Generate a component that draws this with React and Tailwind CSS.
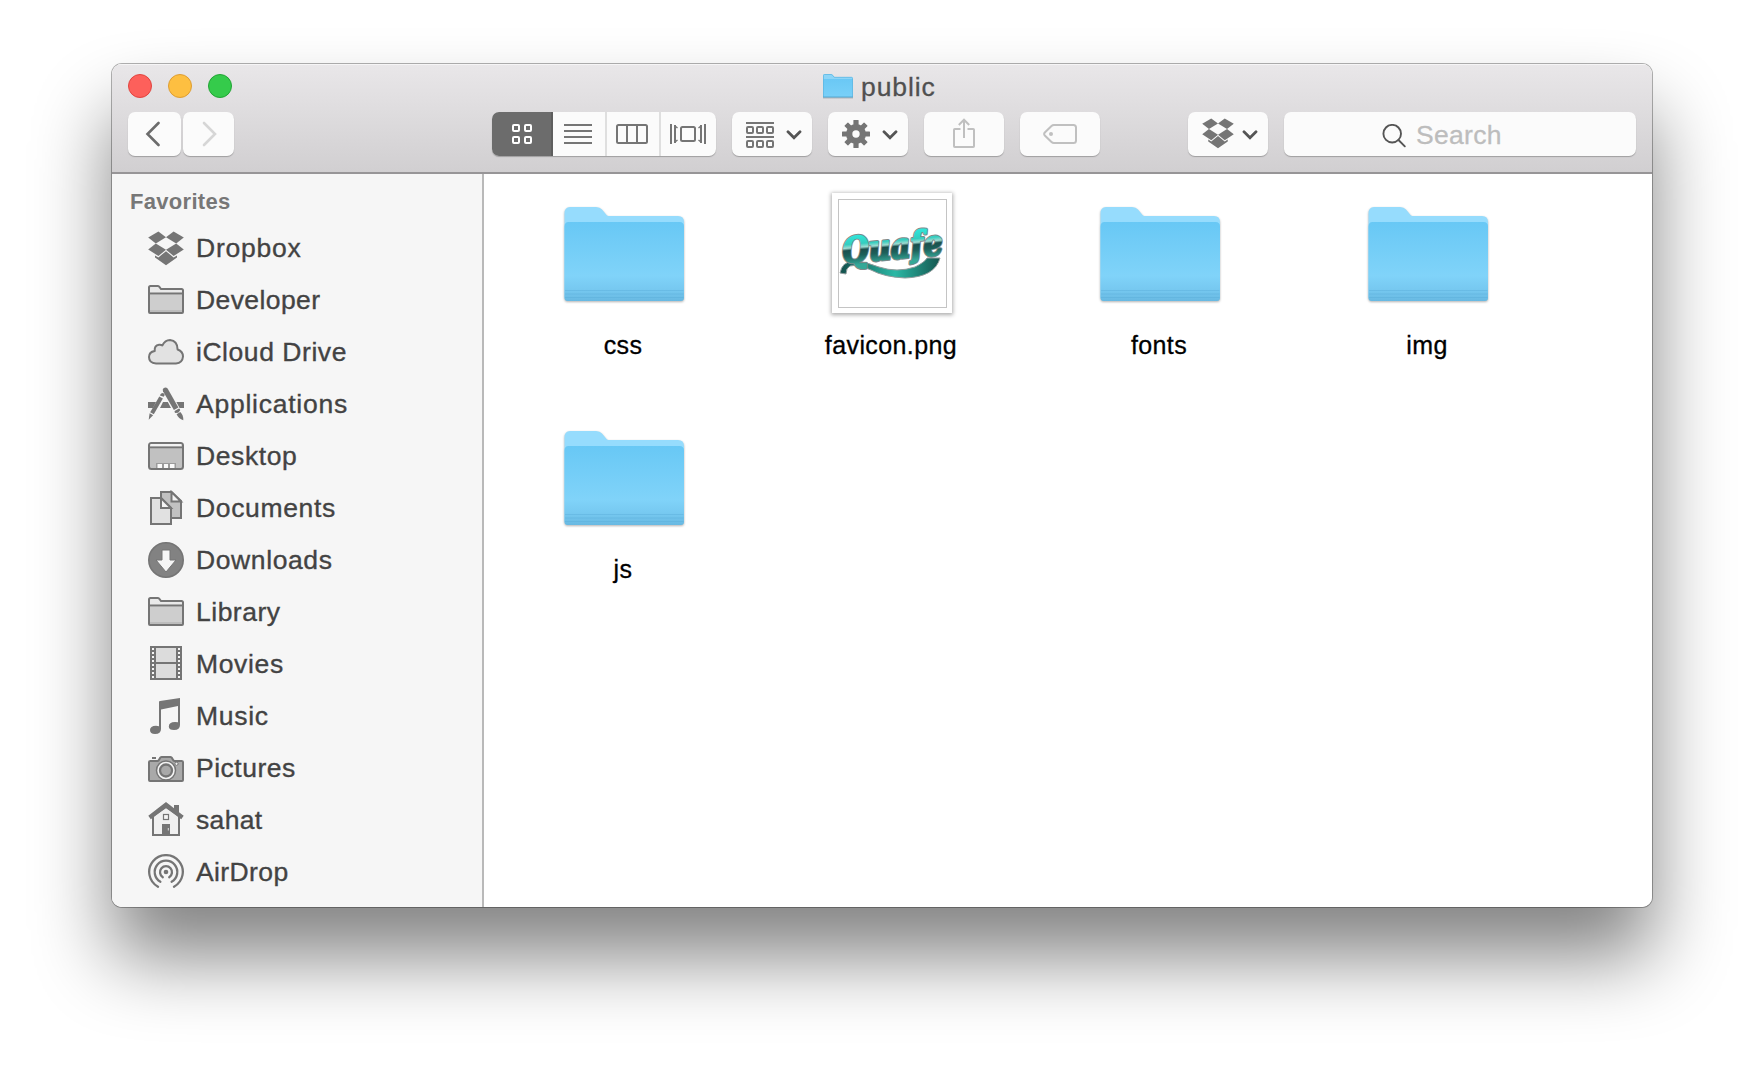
import React from "react";

const G = "#757575";

const Dropbox = ({ w = 36, h = 35, className = "" }) => (
  <svg width={w} height={h} viewBox="0 0 36 35" fill={G} className={className}>
    <path d="M10.4 0.5 18 6.2 7.8 12.4 0.2 6.4z" />
    <path d="M25.6 0.5 18 6.2 28.2 12.4 35.8 6.4z" />
    <path d="M7.8 12.4 0.2 18.4 10.4 25 18 18.8z" />
    <path d="M28.2 12.4 35.8 18.4 25.6 25 18 18.8z" />
    <path d="M18 20.2 10.4 26.4 7 24.4 7 26.6 18 34.2 29 26.6 29 24.4 25.6 26.4z" />
  </svg>
);

const FolderOutline = () => (
  <svg width="36" height="36" viewBox="0 0 36 36">
    <path d="M1 30V5.500Q1 4 2.500 4H9.600Q10.600 4 11.200 4.700L13 7H33.500Q35 7 35 8.500V30Q35 31 34 31H2Q1 31 1 30z" fill="#e9e9e9" stroke={G} strokeWidth="2" />
    <path d="M2 12.500H34V30H2z" fill="#cecece" />
    <path d="M2 28H34V30H2z" fill="#bcbcbc" />
    <path d="M1 11.500H35" stroke={G} strokeWidth="2" />
  </svg>
);

const Cloud = () => (
  <svg width="36" height="36" viewBox="0 0 36 36">
    <path d="M8 29.500Q1 29 1 23Q1 18 6.700 17Q6.200 11.500 11 10.800Q13 10.500 14.300 11.500Q17 6 22 6Q29.500 6.800 29.600 15.500Q35 17.500 35 22.500Q34.500 29 28 29.500z" fill="#e2e2e2" stroke={G} strokeWidth="2" strokeLinejoin="round" />
  </svg>
);

const Apps = () => (
  <svg width="36" height="36" viewBox="0 0 36 36" fill={G}>
    <path d="M0 16H8L5 22H0zM15 16H19.800L23 22H12zM28.400 16H36V22H31.600z" />
    <path d="M15.500 2.300Q17.800 .5 19.600 2.600L30.400 21.400 25.900 24 15 5.200Q14.300 3.500 15.500 2.300z" />
    <path d="M26.600 25 31 22.500Q32 22.600 32.200 24.200L30.200 26.800 27.400 27Q26.200 26.300 26.600 25z" />
    <path d="M28.600 28.200 32.300 26Q35.500 29 35.300 34.300 30.500 32.500 28.600 28.200z" />
    <path d="M12.200 8.800Q13.800 6 16.300 7.800L16.700 9 15.700 10.800 11.900 9.400z" />
    <path d="M11.300 10.500 14.900 12.500 5.800 28.200 2.200 26.200z" />
    <path d="M1.600 27.300 5.100 29.300 .7 33.800z" />
  </svg>
);

const Desktop = () => (
  <svg width="36" height="36" viewBox="0 0 36 36">
    <rect x="1" y="5" width="34" height="26" rx="2.500" fill="#c1c1c1" stroke={G} strokeWidth="2" />
    <path d="M2.500 6H33.500V8.500H2z" fill="#f2f2f2" />
    <path d="M1 9.300H35" stroke={G} strokeWidth="1.800" />
    <path d="M8 25H28V30H8z" fill="#9b9b9b" />
    <path d="M9.500 26H14V30H9.500zM16 26H20V30H16zM22 26H26.500V30H22z" fill="#fafafa" />
  </svg>
);

const Documents = () => (
  <svg width="36" height="36" viewBox="0 0 36 36" stroke={G} strokeWidth="2">
    <path d="M13 2H23.500L33 11V28H13z" fill="#c1c1c1" />
    <path d="M23.500 2V11.500H33z" fill="#f3f3f3" />
    <path d="M3 8H13L23 18V34H3z" fill="#e1e1e1" />
    <path d="M13 8V18H23z" fill="#f5f5f5" />
  </svg>
);

const Downloads = () => (
  <svg width="36" height="36" viewBox="0 0 36 36">
    <circle cx="18" cy="18" r="17.200" fill="#828282" stroke={G} strokeWidth="1.600" />
    <path d="M14 8H22V18H28L18 30 8 18H14z" fill="#f6f6f6" stroke={G} strokeWidth="1" />
  </svg>
);

const Movies = () => (
  <svg width="36" height="36" viewBox="0 0 36 36">
    <path d="M2 0H34V34H2z" fill={G} />
    <path d="M8 2H28V16H8zM8 18H28V32H8z" fill="#dcdcdc" />
    {[2, 6, 10, 14, 18, 22, 26, 30].map((y) => (
      <React.Fragment key={y}>
        <rect x="4" y={y} width="2" height="2" fill="#f5f5f5" />
        <rect x="30" y={y} width="2" height="2" fill="#f5f5f5" />
      </React.Fragment>
    ))}
  </svg>
);

const Music = () => (
  <svg width="36" height="36" viewBox="0 0 36 36" fill={G}>
    <path d="M11 4Q11 3.200 12 3L32 0V27Q32 32 26 32 20.800 32 20.800 28.500 20.800 24.200 27 24 29 24 30 24.300V8L13 11.500V31Q13 36 7 36 2 36 2 32 2 28 8 27.800 10 27.800 11 28.200z" />
  </svg>
);

const Pictures = () => (
  <svg width="36" height="36" viewBox="0 0 36 36">
    <path d="M4 7H8V9H4z" fill={G} />
    <path d="M2.500 11H9.500Q10.500 11 11.500 9L12 8Q12.500 7 13.500 7H22.500Q23.500 7 24 8L24.500 9Q25.500 11 26.500 11H33.500Q35 11 35 12V30Q35 31 34 31H2Q1 31 1 30V12Q1 11 2.500 11z" fill="#a9a9a9" stroke={G} strokeWidth="2" />
    <circle cx="18" cy="20.500" r="9.500" fill="#f4f4f4" stroke={G} strokeWidth="1.500" />
    <circle cx="18" cy="20.500" r="6" fill="#a9a9a9" stroke={G} strokeWidth="2.300" />
    <circle cx="28.500" cy="13.800" r="1.600" fill="#f0f0f0" stroke={G} strokeWidth="1" />
  </svg>
);

const Home = () => (
  <svg width="36" height="36" viewBox="0 0 36 36">
    <path d="M5 14 18 5 31 14V33H5z" fill="#f0f0f0" stroke={G} strokeWidth="2" />
    <path d="M18 0 26 6.200V3H31V10.200L35.700 13.800 33.200 17.300 18 5.800 2.800 17.300 .3 13.800z" fill={G} />
    <path d="M14 22H22V33H14z" fill={G} />
    <rect x="15.500" y="12.500" width="5" height="5" fill="#f6f6f6" stroke={G} strokeWidth="1.200" />
    <path d="M20.300 26V28.500" stroke="#ddd" strokeWidth="1" />
  </svg>
);

const AirDrop = () => (
  <svg width="36" height="36" viewBox="0 0 36 36" fill="none" stroke={G} strokeWidth="2.300" strokeLinecap="round">
    <circle cx="18" cy="18" r="2.300" fill={G} stroke="none" />
    <path d="M14.800 23.200A6 6 0 1 1 21.200 23.200" />
    <path d="M12.400 27.800A11.300 11.300 0 1 1 23.600 27.800" />
    <path d="M10 32.700A16.800 16.800 0 1 1 26 32.700" />
  </svg>
);

const items = [
  ["Dropbox", Dropbox, "tracking-[0.75px]"],
  ["Developer", FolderOutline, "tracking-[0.4px]"],
  ["iCloud Drive", Cloud, "tracking-[0.55px]"],
  ["Applications", Apps, "tracking-[0.75px]"],
  ["Desktop", Desktop, "tracking-[0.6px]"],
  ["Documents", Documents, "tracking-[0.65px]"],
  ["Downloads", Downloads, "tracking-[0.6px]"],
  ["Library", FolderOutline, "tracking-[0.5px]"],
  ["Movies", Movies, "tracking-[0.65px]"],
  ["Music", Music, "tracking-[0.7px]"],
  ["Pictures", Pictures, "tracking-[0.5px]"],
  ["sahat", Home, "tracking-[0.35px]"],
  ["AirDrop", AirDrop, "tracking-[0.4px]"],
];

const BlueFolder = () => (
  <svg width="128" height="128" viewBox="0 0 128 128" className="[filter:drop-shadow(0_1px_1px_rgba(0,0,0,0.3))]">
    <defs>
      <linearGradient id="face" x1="0" y1="0" x2="0" y2="1">
        <stop offset="0" stopColor="#68c8f5" />
        <stop offset="0.680" stopColor="#80d3f9" />
        <stop offset="0.860" stopColor="#76c8f0" />
        <stop offset="1" stopColor="#68b9e2" />
      </linearGradient>
    </defs>
    <path d="M4.500 108V23.500Q4.500 17 10 17H36Q40 17 42 19.500L47 25.500Q48 26 50 26H118Q124 26 124 32V108z" fill="#96dcfd" />
    <path d="M4.500 108V36.500Q4.500 32 8.500 32H119.500Q124 32 124 36.500V108Q124 111 121 111H7.500Q4.500 111 4.500 108z" fill="url(#face)" />
    <path d="M5 100.500H123.500M5 104H123.500M5 107.500H123.500" stroke="#58abd6" strokeOpacity="0.400" strokeWidth="1" />
  </svg>
);

const SmallFolder = () => (
  <svg width="32" height="28" viewBox="0 0 32 28">
    <defs>
      <linearGradient id="mini" x1="0" y1="0" x2="0" y2="1">
        <stop offset="0" stopColor="#6ac8f5" />
        <stop offset="1" stopColor="#79d0f8" />
      </linearGradient>
    </defs>
    <path d="M1 25H31V26.500H1z" fill="#8f9aa2" fillOpacity="0.600" />
    <path d="M1 25V3.500Q1 2 2.500 2H9Q10 2 10.800 3L12.500 5H29.500Q31 5 31 6.500V25z" fill="#8dd5f7" />
    <path d="M1 7H31V25H1z" fill="url(#mini)" />
    <path d="M1.500 25V3.500Q1.500 2.500 2.500 2.500H9Q10 2.500 10.800 3.500L12.200 5.300H29.500Q30.500 5.300 30.500 6.500V25" fill="none" stroke="#5fb7e2" strokeWidth="0.800" />
    <path d="M1 25H31" stroke="#54a9d4" strokeWidth="1.200" />
  </svg>
);

const logoText = {
  x: 4,
  y: 63,
  fontSize: 35,
  textLength: 101,
  lengthAdjust: "spacingAndGlyphs",
};

const Favicon = () => (
  <div className="mt-[3px] flex h-[120px] w-[120px] items-center justify-center bg-white shadow-[0_1px_4px_1px_rgba(0,0,0,0.32)]">
    <div className="h-[109px] w-[109px] border border-[#c4c4c4]">
      <svg width="107" height="107" viewBox="0 0 107 107" className="overflow-visible">
        <defs>
          <linearGradient id="chrome" gradientUnits="userSpaceOnUse" x1="0" y1="36" x2="0" y2="66">
            <stop offset="0" stopColor="#2fe6da" />
            <stop offset="0.300" stopColor="#35cdbf" />
            <stop offset="0.420" stopColor="#9fdcd2" />
            <stop offset="0.500" stopColor="#1b4f4c" />
            <stop offset="0.680" stopColor="#1c605a" />
            <stop offset="1" stopColor="#35a898" />
          </linearGradient>
          <linearGradient id="swoosh" x1="0" y1="0" x2="1" y2="0">
            <stop offset="0" stopColor="#134f4b" />
            <stop offset="0.550" stopColor="#2bb8a5" />
            <stop offset="1" stopColor="#14564f" />
          </linearGradient>
        </defs>
        <path d="M1 73Q3 62 14 61Q26 61 40 67Q58 73 76 67Q86 62 88 58L101 58Q96 77 66 78Q45 77 32 70Q18 64 11 66Q7 68 7 74z" fill="url(#swoosh)" stroke="#8f9c9c" strokeWidth="1" />
        <g transform="rotate(-5 5 63)" fontFamily="DejaVu Serif" fontWeight="700" fontStyle="italic" strokeLinejoin="round">
          <text {...logoText} fill="#7e8989" stroke="#7e8989" strokeWidth="3.600">Quafe</text>
          <text {...logoText} fill="url(#chrome)" stroke="url(#chrome)" strokeWidth="1.600">Quafe</text>
        </g>
      </svg>
    </div>
  </div>
);

const files = [
  ["css", BlueFolder],
  ["favicon.png", Favicon],
  ["fonts", BlueFolder],
  ["img", BlueFolder],
  ["js", BlueFolder],
];

const Chevron = () => (
  <svg width="16" height="10" viewBox="0 0 16 10" fill="none" stroke="#555" strokeWidth="2.800" strokeLinecap="round" strokeLinejoin="miter" className="mt-px">
    <path d="M2 1.700 8 7.700 14 1.700" />
  </svg>
);

const btn = "flex h-11 shrink-0 items-center rounded-[7px] bg-[#fbfbfb] shadow-[0_1px_1px_rgba(0,0,0,0.25)]";

const Gear = () => (
  <svg width="28" height="28" viewBox="-14 -14 28 28" fill={G}>
    {[0, 45, 90, 135].map((a) => (
      <rect key={a} x="-2.600" y="-14" width="5.200" height="28" rx="0.600" transform={"rotate(" + a + ")"} />
    ))}
    <circle r="10" />
    <circle r="3.700" fill="#fbfbfb" />
  </svg>
);

const Grouping = () => (
  <svg width="28" height="28" viewBox="0 0 28 28" fill="none" stroke={G} strokeWidth="2">
    <path d="M0 3H28M0 17H28" />
    {[1, 11, 21].map((x) => (
      <React.Fragment key={x}>
        <rect x={x} y="7" width="6" height="6" rx="1" />
        <rect x={x} y="21" width="6" height="6" rx="1" />
      </React.Fragment>
    ))}
  </svg>
);

const Toolbar = () => (
  <div className="flex h-11 items-center pl-4 pr-4">
    <div className={btn + " w-[53px] pl-4"}>
      <svg width="16" height="26" viewBox="0 0 16 26" fill="none" stroke="#6c6c6c" strokeWidth="2.600" strokeLinecap="round">
        <path d="M14.500 2 3.500 13 14.500 24" />
      </svg>
    </div>
    <div className={btn + " ml-[2px] w-[51px] pl-[19px]"}>
      <svg width="16" height="26" viewBox="0 0 16 26" fill="none" stroke="#d6d6d6" strokeWidth="2.600" strokeLinecap="round">
        <path d="M2 2 13 13 2 24" />
      </svg>
    </div>
    <div className={btn + " ml-[258px] w-56 overflow-hidden"}>
      <div className="flex h-11 w-[61px] items-center justify-center border-r-2 border-[#5e5e5e] bg-[#6c6c6c]">
        <svg width="20" height="20" viewBox="0 0 20 20" fill="none" stroke="#fff" strokeWidth="2">
          <rect x="1" y="1" width="6" height="6" rx="1" />
          <rect x="13" y="1" width="6" height="6" rx="1" />
          <rect x="1" y="13" width="6" height="6" rx="1" />
          <rect x="13" y="13" width="6" height="6" rx="1" />
        </svg>
      </div>
      <div className="flex h-11 w-[54px] items-center border-r-2 border-[#dfdfdf] pl-[11px]">
        <svg width="28" height="20" viewBox="0 0 28 20" stroke={G} strokeWidth="2">
          <path d="M0 1H28M0 7H28M0 13H28M0 19H28" />
        </svg>
      </div>
      <div className="flex h-11 w-[54px] items-center border-r-2 border-[#dfdfdf] pl-[9px]">
        <svg width="32" height="20" viewBox="0 0 32 20" fill="none" stroke={G} strokeWidth="2">
          <rect x="1" y="1" width="30" height="18" rx="1.500" />
          <path d="M11 1V19M21 1V19" />
        </svg>
      </div>
      <div className="flex h-11 w-[55px] items-center pl-[9px]">
        <svg width="36" height="20" viewBox="0 0 36 20" fill="none" stroke={G} strokeWidth="2">
          <rect x="11" y="3" width="14" height="14" rx="1.500" />
          <path d="M1 0V20M35 0V20M5 1V19M31 1V19" />
          <path d="M5 2 7.500 4M5 18 7.500 16M31 2 28.500 4M31 18 28.500 16" strokeWidth="1.500" />
        </svg>
      </div>
    </div>
    <div className={btn + " ml-4 w-20 gap-[12px] pl-[14px]"}>
      <Grouping />
      <Chevron />
    </div>
    <div className={btn + " ml-4 w-20 gap-[12px] pl-[14px]"}>
      <Gear />
      <Chevron />
    </div>
    <div className={btn + " ml-4 w-20 justify-center"}>
      <svg width="22" height="30" viewBox="0 0 22 30" fill="none" stroke="#c0c0c0" strokeWidth="2" className="-mt-[2px]">
        <path d="M7.500 11H1.800Q1 11 1 11.800V28.200Q1 29 1.800 29H20.200Q21 29 21 28.200V11.800Q21 11 20.200 11H14.500" />
        <path d="M11 20V1.800M5.800 7 11 1.700 16.200 7" />
      </svg>
    </div>
    <div className={btn + " ml-4 w-20 justify-center"}>
      <svg width="34" height="20" viewBox="0 0 34 20" fill="none" stroke="#c0c0c0" strokeWidth="2">
        <path d="M11 1H30.500Q33 1 33 3.500V16.500Q33 19 30.500 19H11Q9.500 19 8.500 18L1.800 11.500Q.5 10 1.800 8.500L8.500 2Q9.500 1 11 1z" />
        <circle cx="8" cy="10" r="2" fill="#c0c0c0" stroke="none" />
      </svg>
    </div>
    <div className={btn + " ml-[88px] w-20 gap-[8px] pl-[14px]"}>
      <Dropbox w={32} h={31} className="-mt-[2px]" />
      <Chevron />
    </div>
    <div className={btn + " ml-4 w-[352px] pl-[98px]"}>
      <svg width="24" height="24" viewBox="0 0 24 24" fill="none" stroke="#555" strokeWidth="1.900" strokeLinecap="round" className="mt-[3px]">
        <circle cx="10.200" cy="9.700" r="8.800" />
        <path d="M16.500 16 22.800 22.300" />
      </svg>
      <span className="ml-[10px] pt-[2px] text-[26.5px] leading-[42px] tracking-[0.3px] text-[#bdbdbd] [-webkit-text-stroke:0.3px_#bdbdbd]">Search</span>
    </div>
  </div>
);

export default function App() {
  return (
    <div className="h-[1068px] w-[1764px] overflow-hidden bg-white px-28 pt-16 font-['Liberation_Sans',Arial,sans-serif]">
      <div className="h-[843px] w-[1540px] rounded-[10px] shadow-[0_0_0_1px_rgba(0,0,0,0.3),0_50px_78px_rgba(0,0,0,0.49)]">
        <div className="flex h-full flex-col overflow-hidden rounded-[10px] bg-white">
          <header className="h-[110px] shrink-0 border-b-2 border-[#979597] bg-linear-to-b from-[#e9e7e9] to-[#d1cfd1] shadow-[inset_0_1px_0_#f6f5f6]">
            <div className="flex h-12 items-center pb-1 pl-4">
              <div className="flex w-[694px] gap-4">
                <i className="h-6 w-6 rounded-full border border-[#e0443f] bg-[#fd605b]" />
                <i className="h-6 w-6 rounded-full border border-[#dd9d33] bg-[#fdbf41]" />
                <i className="h-6 w-6 rounded-full border border-[#22a435] bg-[#35cb4b]" />
              </div>
              <SmallFolder />
              <span className="ml-[7px] pt-px text-[26.5px] leading-8 tracking-[0.9px] text-[#505050] [-webkit-text-stroke:0.3px_#505050]">public</span>
            </div>
            <Toolbar />
          </header>
          <div className="flex min-h-0 flex-1">
            <aside className="w-[372px] shrink-0 border-r-2 border-[#b9b9b9] bg-[#f6f6f6] pl-[18px] pt-[14px]">
              <h2 className="h-7 text-[22px] font-bold leading-7 tracking-[0.3px] text-[#777]">Favorites</h2>
              <ul className="pt-[6px]">
                {items.map(([name, Icon, tracking]) => (
                  <li key={name} className="flex h-[52px] items-center pl-[18px]">
                    <Icon />
                    <span className={"ml-3 whitespace-nowrap text-[26.5px] leading-8 text-[#434343] [-webkit-text-stroke:0.35px_#434343] " + tracking}>{name}</span>
                  </li>
                ))}
              </ul>
            </aside>
            <main className="grid flex-1 auto-rows-[224px] grid-cols-[repeat(4,268px)] content-start pl-[6px] pt-4">
              {files.map(([name, Art]) => (
                <div key={name} className="flex flex-col items-center">
                  <div className="flex h-32 w-32 items-start justify-center">
                    <Art />
                  </div>
                  <span className="mt-[11px] pr-[2px] text-[25px] leading-8 tracking-[0.4px] text-black [-webkit-text-stroke:0.3px_#000]">{name}</span>
                </div>
              ))}
            </main>
          </div>
        </div>
      </div>
    </div>
  );
}
